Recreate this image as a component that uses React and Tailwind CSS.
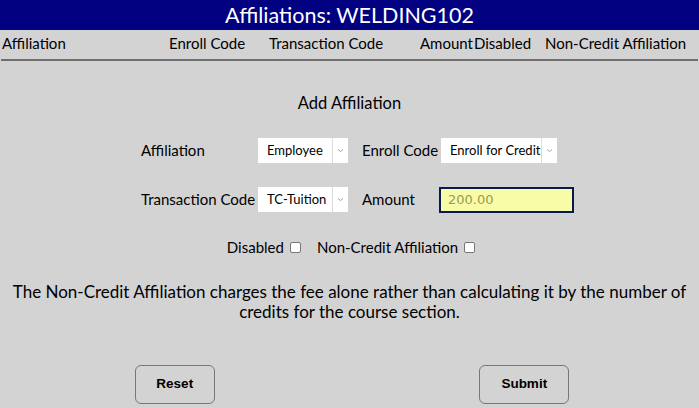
import React from "react";

const font = { fontFamily: "Lato, 'Open Sans', sans-serif" };

function Select({ value, width }) {
  return (
    <div className="flex h-[25px] bg-white" style={{ width }}>
      <div className="flex flex-1 items-center pl-[9px] text-[13px] text-black">{value}</div>
      <div className="w-px bg-[#dcdcdc]" />
      <div className="flex w-[15px] items-center justify-center">
        <svg width="7" height="5" viewBox="0 0 7 5">
          <path d="M1 1.5 L3.5 3.5 L6 1.5" fill="none" stroke="#a0a0a0" strokeWidth="1" />
        </svg>
      </div>
    </div>
  );
}

function Checkbox() {
  return <span className="ml-[6px] inline-block h-[11px] w-[11px] rounded-[2px] border border-[#777] bg-white align-middle" />;
}

export default function App() {
  return (
    <div className="h-[408px] w-[699px] overflow-hidden bg-[#d3d3d3] text-black" style={font}>
      <div className="flex h-[30px] items-center justify-center bg-[#000080] text-[21.5px] text-white">
        Affiliations: WELDING102
      </div>
      <div className="grid h-[26px] grid-cols-[167px_100px_151px_54px_71px_1fr] items-center whitespace-nowrap pl-[2px] text-[15px]">
        <div>Affiliation</div>
        <div>Enroll Code</div>
        <div>Transaction Code</div>
        <div>Amount</div>
        <div>Disabled</div>
        <div>Non-Credit Affiliation</div>
      </div>
      <div className="mx-[1px] mt-[3px] h-[2px] bg-[#6f6f6f]" />
      <div className="mt-[32px] text-center text-[16.5px] leading-[21px]">Add Affiliation</div>
      <div className="ml-[141px] mt-[24px] grid grid-cols-[117px_104px_79px_auto] grid-rows-[25px_25px] gap-y-[24px] whitespace-nowrap text-[15px]">
        <div className="flex items-center">Affiliation</div>
        <div className="flex items-center"><Select value="Employee" width={90} /></div>
        <div className="flex items-center">Enroll Code</div>
        <div className="flex items-center"><Select value="Enroll for Credit" width={116} /></div>
        <div className="flex items-center">Transaction Code</div>
        <div className="flex items-center"><Select value="TC-Tuition" width={90} /></div>
        <div className="flex items-center">Amount</div>
        <div className="-ml-[2px] flex items-center">
          <div
            className="flex h-[26px] w-[135px] items-center border-2 border-[#0a1a50] bg-[#f8fca6] pl-[7px] text-[#9a9a50]"
            style={{ fontFamily: "'DejaVu Sans', Verdana, sans-serif", fontSize: 13 }}
          >
            200.00
          </div>
        </div>
      </div>
      <div className="mt-[25px] flex items-center justify-center text-[15px] leading-[20px]">
        <span className="ml-[3px]">Disabled</span>
        <Checkbox />
        <span className="ml-[16px]">Non-Credit Affiliation</span>
        <Checkbox />
      </div>
      <div className="mt-[25px] text-center text-[17px] leading-[20px]">
        The Non-Credit Affiliation charges the fee alone rather than calculating it by the number of
        <br />
        credits for the course section.
      </div>
      <div className="mt-[43px] grid grid-cols-2">
        <div className="flex justify-center">
          <button
            className="h-[39px] w-[80px] rounded-[6px] border border-[#777] bg-[#d3d3d3] text-[13.5px] font-bold"
            style={{ fontFamily: "'Liberation Sans', Arial, sans-serif" }}
          >
            Reset
          </button>
        </div>
        <div className="flex justify-center">
          <button
            className="h-[39px] w-[90px] rounded-[6px] border border-[#777] bg-[#d3d3d3] text-[13.5px] font-bold"
            style={{ fontFamily: "'Liberation Sans', Arial, sans-serif" }}
          >
            Submit
          </button>
        </div>
      </div>
    </div>
  );
}
